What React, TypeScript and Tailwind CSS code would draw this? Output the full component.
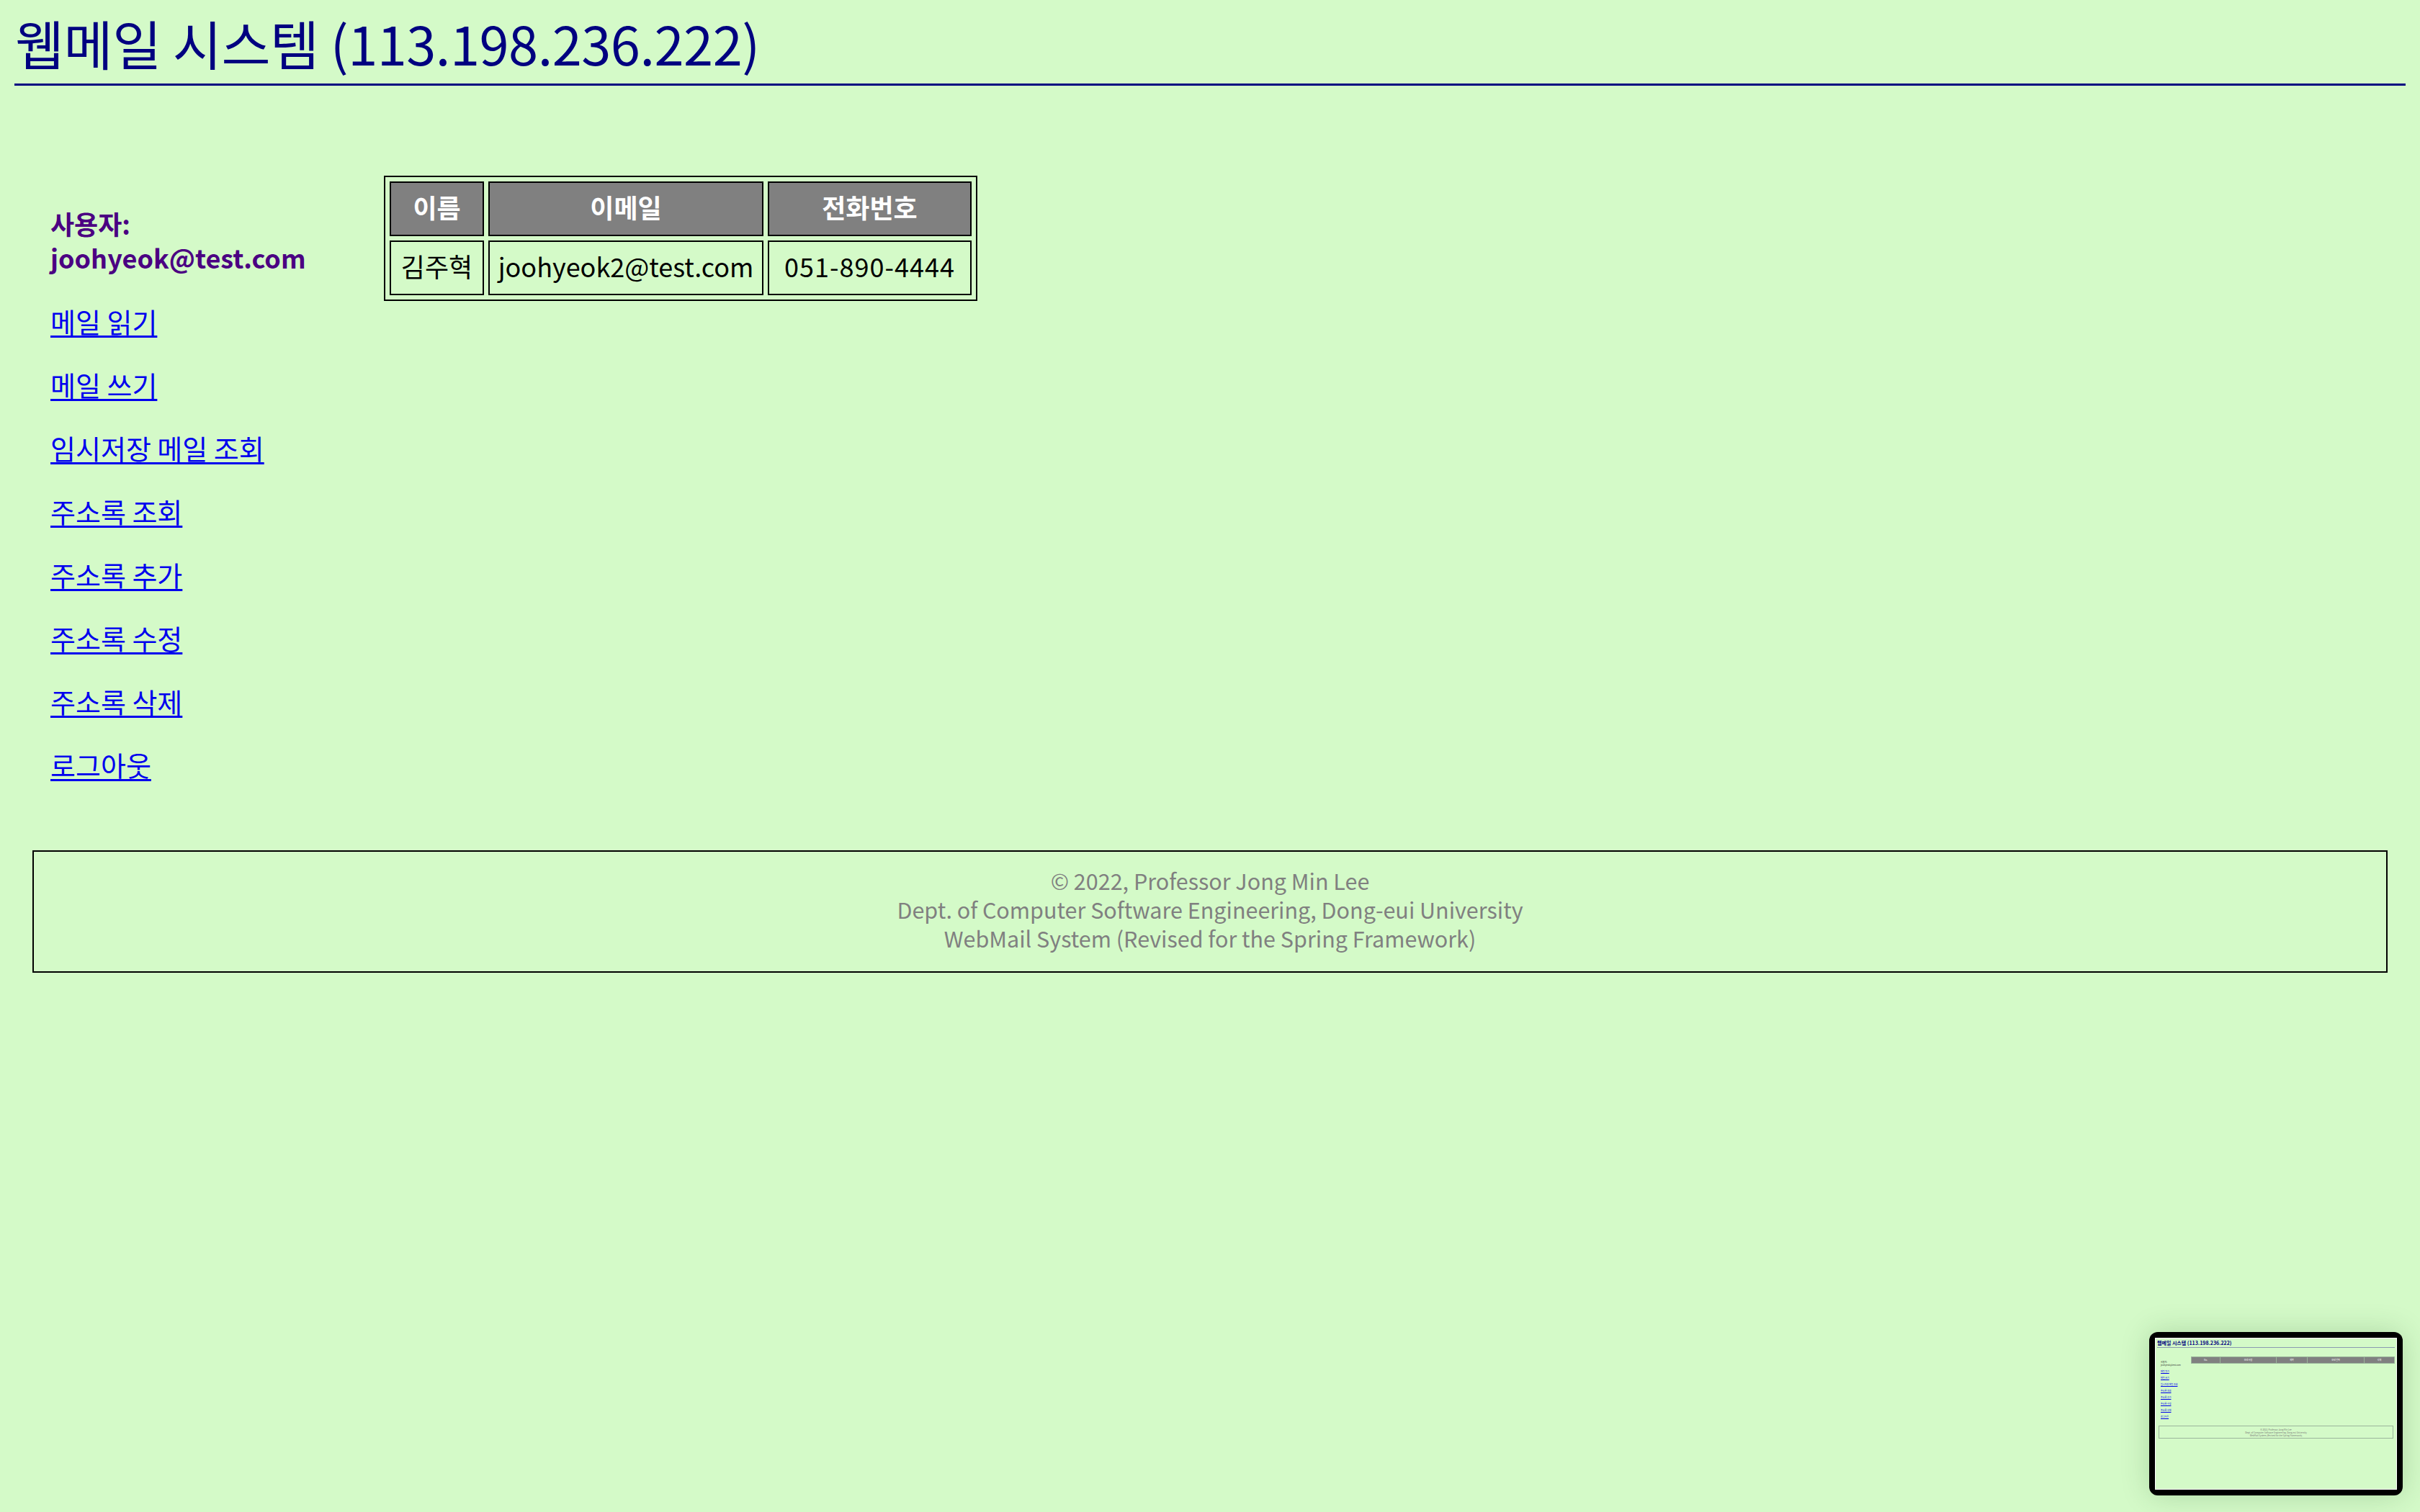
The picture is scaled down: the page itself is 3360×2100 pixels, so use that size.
const menu = [
  "메일 읽기",
  "메일 쓰기",
  "임시저장 메일 조회",
  "주소록 조회",
  "주소록 추가",
  "주소록 수정",
  "주소록 삭제",
  "로그아웃",
];

// bottom-right screenshot preview thumbnail
function Thumbnail() {
  return (
    <div className="absolute left-[2984px] top-[1850px] w-[352px] h-[227px] rounded-[12px] bg-black p-[8px] shadow-[0_0_40px_rgba(0,60,0,0.18)]">
      <div className="w-full h-full border border-white bg-[#d4fac8] px-[2px] pt-[2px] flex flex-col">
        <div className="text-[7px] leading-[9px] text-[#000080] font-bold">웹메일 시스템 (113.198.236.222)</div>
        <div className="border-t border-[#8a9ab0] mt-[1px]" />
        <div className="flex mt-[12px]">
          <div className="w-[47px] pl-[5px] pt-[6px] flex flex-col gap-[5px] text-[3px] leading-[4px]">
            <div className="text-[#333]">사용자:<br />joohyeok@test.com</div>
            {menu.map((m) => (
              <div key={m} className="text-[#0000ee] underline">{m}</div>
            ))}
          </div>
          <div className="flex-1 flex h-[10px] bg-[#808080] border border-[#9bb59b] text-white text-[3px] leading-[8px] text-center">
            <div className="w-[40px] border-r border-[#9bb59b]">No.</div>
            <div className="w-[78px] border-r border-[#9bb59b]">보낸 사람</div>
            <div className="w-[43px] border-r border-[#9bb59b]">제목</div>
            <div className="w-[79px] border-r border-[#9bb59b]">보낸 날짜</div>
            <div className="flex-1">삭제</div>
          </div>
        </div>
        <div className="mt-[10px] mx-[2px] border border-[#9bb59b] h-[18px] text-[3px] leading-[4px] text-center text-[#777] pt-[3px]">
          © 2022, Professor Jong Min Lee<br />
          Dept. of Computer Software Engineering, Dong-eui University<br />
          WebMail System (Revised for the Spring Framework)
        </div>
      </div>
    </div>
  );
}

export default function App() {
  return (
    <div className="relative min-h-screen w-full bg-[#d4fac8] px-[20px] font-['Noto_Sans_CJK_KR','Noto_Sans',sans-serif]">
      <h1 className="pt-[11px] pl-[1px] text-[74px] leading-[96px] font-normal text-[#000080] tracking-[-0.5px]">
        웹메일 시스템 (113.198.236.222)
      </h1>
      <hr className="mt-[9px] border-0 border-t-[3px] border-[#000080]" />

      <div className="flex pt-[125px] pl-[50px]">
        {/* 왼쪽 메뉴 */}
        <div className="w-[463px] pt-[43px] flex flex-col gap-[41px] text-[38px] leading-[47px]">
          <div className="font-bold text-[#4b0082] text-[36px]">
            <div>사용자:</div>
            <div>joohyeok@test.com</div>
          </div>
          {menu.map((m) => (
            <a key={m} href="#" className="text-[#0000ee] underline underline-offset-[4px] decoration-[3px] w-fit">
              {m}
            </a>
          ))}
        </div>

        {/* 주소록 */}
        <div>
          <table className="border-separate border-spacing-[6px] border-2 border-black text-[36px] leading-[52px]">
            <thead>
              <tr>
                <th className="w-[131px] border-2 border-black bg-[#808080] text-white font-bold px-[10px] pt-[7px] pb-[13px]">이름</th>
                <th className="w-[382px] border-2 border-black bg-[#808080] text-white font-bold px-[10px] pt-[7px] pb-[13px]">이메일</th>
                <th className="w-[283px] border-2 border-black bg-[#808080] text-white font-bold px-[10px] pt-[7px] pb-[13px]">전화번호</th>
              </tr>
            </thead>
            <tbody>
              <tr>
                <td className="border-2 border-black text-black text-center px-[10px] pt-[7px] pb-[13px]">김주혁</td>
                <td className="border-2 border-black text-black text-center px-[10px] pt-[7px] pb-[13px]">joohyeok2@test.com</td>
                <td className="border-2 border-black text-black text-center px-[10px] pt-[7px] pb-[13px] tracking-[1px]">051-890-4444</td>
              </tr>
            </tbody>
          </table>
        </div>
      </div>

      <footer className="mt-[96px] mx-[25px] border-[2.5px] border-black pt-[20px] pb-[26px] text-center text-[#808080] text-[30.5px] leading-[40px]">
        <div>© 2022, Professor Jong Min Lee</div>
        <div>Dept. of Computer Software Engineering, Dong-eui University</div>
        <div>WebMail System (Revised for the Spring Framework)</div>
      </footer>

      <Thumbnail />
    </div>
  );
}
